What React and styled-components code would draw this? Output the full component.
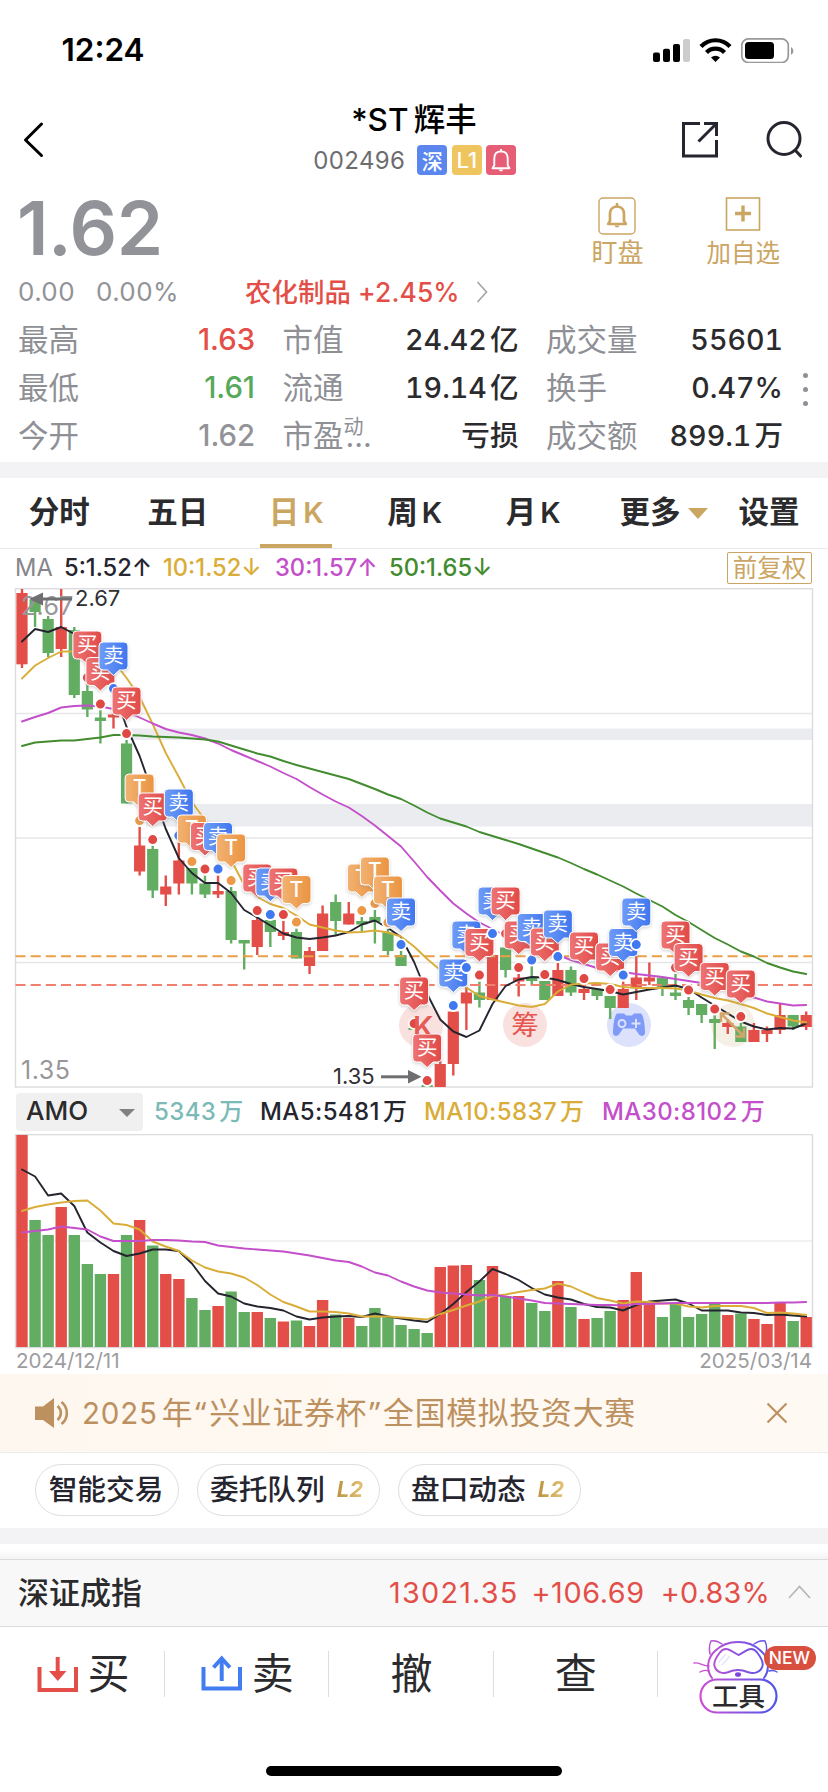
import React, { useState } from 'react'
import styled, { createGlobalStyle, css } from 'styled-components'

const GlobalStyle = createGlobalStyle`
  * { box-sizing: border-box; }
  body {
    margin: 0;
    background: #fff;
    color: #2b2b2d;
    font-family: Inter, "Noto Sans CJK SC", sans-serif;
  }
  svg { display: block; flex: none; }
  svg text { font-family: Inter, "Noto Sans CJK SC", sans-serif; }
  button { font: inherit; color: inherit; border: 0; background: none; padding: 0; }
`

const RED = '#e34f48'
const GREEN = '#62ad62'
const GOLD = '#cba562'
const GRAY = '#929398'
const BLACK = '#25252f'
const YELLOW = '#d9ad38'
const PURPLE = '#c44fca'
const DARKGREEN = '#438b2f'

const Screen = styled.main`
  width: 828px;
  height: 1792px;
  overflow: hidden;
  display: flex;
  flex-direction: column;
  background: #fff;
`

const StatusBar = styled.div`
  height: 88px;
  padding: 11px 33px 0 61.5px;
  display: flex;
  align-items: center;
  justify-content: space-between;
`
const Clock = styled.span`
  color: #000;
  font-size: 31.5px;
  font-weight: 600;
`

const NavBar = styled.header`
  height: 102px;
  padding: 0 26px 0 22px;
  display: grid;
  grid-template-columns: 120px 1fr 120px;
  align-items: start;
`
const BackButton = styled.button`
  margin-top: 33px;
  width: 24px;
`
const Title = styled.div`
  display: flex;
  flex-direction: column;
  align-items: center;
`
const StockName = styled.h1`
  margin: 9px 0 0 4px;
  height: 46px;
  line-height: 46px;
  color: #000;
  font-size: 31.5px;
  font-weight: 500;
  word-spacing: -3px;
`
const CodeRow = styled.div`
  display: flex;
  align-items: center;
  height: 34px;
  margin-left: 10px;
`
const Code = styled.span`
  color: #6d6d70;
  font-size: 24px;
  letter-spacing: 0.4px;
  margin-right: 12px;
`
const Badge = styled.span`
  width: 30px;
  height: 30px;
  margin-right: 4.5px;
  border-radius: 4px;
  display: flex;
  align-items: center;
  justify-content: center;
  color: #fff;
  font-size: ${(p) => p.$size || 21}px;
  font-weight: 500;
  background: ${(p) => p.$bg};
`
const NavActions = styled.div`
  display: flex;
  justify-content: space-between;
  padding-top: 33px;
`

const Quote = styled.section`
  height: 124px;
  padding: 0 48px 0 18px;
  display: flex;
  flex-direction: column;
`
const PriceRow = styled.div`
  display: flex;
  justify-content: space-between;
  height: 82px;
`
const Price = styled.div`
  margin-left: -1px;
  color: ${GRAY};
  font-size: 74.5px;
  font-weight: 600;
  line-height: 76px;
  letter-spacing: -0.4px;
`
const QuickActions = styled.div`
  display: flex;
  gap: 63px;
  padding-top: 7px;
`
const QuickAction = styled.button`
  display: flex;
  flex-direction: column;
  align-items: center;
  color: ${GOLD};
  font-size: ${(p) => p.$size}px;
  line-height: 36px;
`
const ChangeRow = styled.div`
  display: flex;
  align-items: center;
  height: 40px;
  line-height: 40px;
  color: ${GRAY};
  font-size: 26px;
`
const Change = styled.span`
  width: ${(p) => p.$w}px;
  letter-spacing: 0.4px;
`
const Sector = styled.span`
  color: ${RED};
  font-size: 26.4px;
  font-weight: 500;
  letter-spacing: 0.1px;
  margin-right: 16px;
`

const Stats = styled.section`
  height: 148px;
  padding: 2px 13px 0 18px;
  display: flex;
`
const StatGrid = styled.div`
  width: 765px;
  display: grid;
  grid-template-columns: 237px 236px 237px;
  column-gap: 27.5px;
  grid-auto-rows: 48px;
`
const Stat = styled.div`
  display: flex;
  justify-content: space-between;
  line-height: 48px;
`
const StatLabel = styled.span`
  color: #8f9095;
  font-size: 30.5px;
  sup {
    display: inline-block;
    font-size: 20px;
    line-height: 20px;
    vertical-align: 13px;
  }
`
const Dots = styled.span`
  margin-left: -18px;
`
const StatValue = styled.span`
  color: ${(p) => p.$color || '#2b2b2d'};
  font-size: 29.3px;
  font-weight: 500;
  ${(p) => !p.$color && css`
    font-size: 28.6px;
    font-variant-numeric: tabular-nums;
  `}
`
const Unit = styled.span`
  margin-left: ${(p) => p.$gap || 3}px;
`
const MoreDots = styled.div`
  width: 6px;
  margin: 57px 0 0 20px;
  display: flex;
  flex-direction: column;
  gap: 9px;
  i {
    width: 5px;
    height: 5px;
    border-radius: 50%;
    background: #909196;
  }
`

const Divider = styled.div`
  height: 16px;
  background: #f3f3f5;
`

const Tabs = styled.nav`
  height: 71px;
  display: flex;
  border-bottom: 1px solid #e9e9eb;
`
const Tab = styled.button`
  flex: none;
  width: ${(p) => p.$w || 118.5}px;
  display: flex;
  align-items: center;
  justify-content: center;
  height: 70px;
  font-size: 30.5px;
  font-weight: 600;
  white-space: nowrap;
  span {
    height: 70px;
    line-height: 68px;
    padding: 0 8.5px;
  }
  b { margin-left: 4px; font-size: 29px; font-weight: 600; }
  ${(p) => p.$active && css`
    color: ${GOLD};
    span { border-bottom: 4px solid ${GOLD}; }
  `}
`
const Triangle = styled.i`
  margin-left: -1px;
  border: 10px solid transparent;
  border-top: 11px solid ${GOLD};
  border-bottom: 0;
`

const MaRow = styled.div`
  height: 39px;
  padding: 0 16px 2px 15px;
  display: flex;
  align-items: center;
  font-size: 23.7px;
`
const MaItem = styled.span`
  width: ${(p) => p.$w}px;
  color: ${(p) => p.$color};
  font-weight: ${(p) => p.$weight || 500};
  white-space: nowrap;
`
const AdjustButton = styled.button`
  margin: 1px 0 0 auto;
  width: 85px;
  height: 32px;
  line-height: 29px;
  border: 1.5px solid ${GOLD};
  border-radius: 2px;
  color: ${GOLD};
  font-size: 24.5px;
`

const AmoRow = styled.div`
  height: 45px;
  padding: 0 16px;
  display: flex;
  align-items: center;
`
const AmoSelect = styled.button`
  width: 127px;
  height: 38px;
  margin-right: 11px;
  padding: 0 8px 3px 10px;
  display: flex;
  align-items: center;
  justify-content: space-between;
  border-radius: 4px;
  background: #f0f0f0;
  font-size: 26px;
  font-weight: 500;
  line-height: 35px;
  i {
    margin-top: 5px;
    border: 8px solid transparent;
    border-top: 8px solid #808085;
    border-bottom: 0;
  }
`
const AmoItem = styled.span`
  width: ${(p) => p.$w}px;
  padding-bottom: 4px;
  color: ${(p) => p.$color};
  font-size: 24px;
  font-weight: 500;
  letter-spacing: 0.4px;
  white-space: nowrap;
`
const Dates = styled.div`
  height: 25px;
  padding: 0 16px;
  display: flex;
  justify-content: space-between;
  line-height: 24px;
  color: #9d9da0;
  font-size: 20.6px;
`

const Banner = styled.div`
  height: 79px;
  padding: 0 40px 0 35px;
  display: flex;
  align-items: center;
  background: linear-gradient(90deg, #fef7f0, #fefaf3);
  border-bottom: 1px solid #ececec;
  color: #bd9060;
`
const BannerText = styled.span`
  margin: -5px 0 0 12px;
  flex: 1;
  font-size: 30.8px;
  letter-spacing: 0.8px;
  em {
    font-family: "Noto Sans", sans-serif;
    font-style: normal;
    padding: 0 2px;
  }
`
const Year = styled.span`
  font-size: 29.5px;
  margin-right: 4px;
`

const Pills = styled.div`
  height: 75px;
  padding: 0 35px;
  display: flex;
  gap: 18px;
  align-items: center;
`
const Pill = styled.button`
  height: 52px;
  width: ${(p) => p.$w}px;
  padding-right: 2px;
  margin-top: -2px;
  border: 1.5px solid #dfdfe2;
  border-radius: 26px;
  color: ${BLACK};
  font-size: 28.7px;
  font-weight: 500;
  display: flex;
  align-items: center;
  justify-content: center;
  line-height: 47px;
`
const Level2 = styled.span`
  margin-left: 12px;
  padding-right: 2px;
  font-size: 22px;
  font-weight: 700;
  font-style: italic;
  color: transparent;
  background: linear-gradient(90deg, #bb9440, #e6c67c);
  background-clip: text;
`

const Gap = styled.div`
  height: 15px;
  background: linear-gradient(#fff 40%, #f3f3f3);
`
const IndexBar = styled.div`
  height: 68px;
  padding: 0 17px 2px 18px;
  display: flex;
  align-items: center;
  background: #f8f8f8;
  border-top: 1.5px solid #dcdcde;
  border-bottom: 1.5px solid #dcdcde;
`
const IndexName = styled.span`
  flex: 1;
  margin-top: -4px;
  font-size: 31px;
  font-weight: 500;
`
const IndexValue = styled.span`
  color: ${RED};
  font-size: 28.8px;
  margin-right: ${(p) => p.$gap}px;
  letter-spacing: ${(p) => p.$ls}px;
`

const ActionBar = styled.footer`
  height: 93px;
  padding-left: 1px;
  display: flex;
  align-items: center;
`
const Action = styled.button`
  width: 164.2px;
  height: 46px;
  padding-left: 1px;
  display: flex;
  align-items: center;
  justify-content: center;
  gap: 9px;
  font-size: 42px;
  line-height: 46px;
  border-right: 1px solid #dedee0;
`
const Tools = styled.div`
  flex: 1;
  height: 94px;
`
const HomeIndicator = styled.div`
  width: 296px;
  height: 10px;
  margin: 46px auto 0;
  border-radius: 5px;
  background: #000;
`

/* ---------- chart data ---------- */

// [up?, body top, body bottom, high, low]
const CANDLES = [
  [1, 593, 664.3, 589, 668], [0, 600, 612, 600, 627], [0, 619, 653, 616, 657], [1, 627, 649, 589, 657],
  [0, 630, 695, 627, 698], [0, 691, 709.5, 680, 717], [0, 717.5, 721, 710, 743.5], [1, 714.5, 717.5, 713, 728.5],
  [0, 743.5, 803.5, 740, 803.5], [1, 845.5, 871.5, 826.5, 875.5], [0, 849, 890.5, 845.5, 898], [1, 886.5, 894.5, 875.5, 906],
  [1, 860.5, 883.5, 842.5, 894.5], [0, 868, 883.5, 868, 894.5], [0, 883.5, 894.5, 875.5, 898], [1, 891, 894.5, 875.5, 898],
  [0, 891, 940, 887, 943.5], [0, 940, 943.5, 940, 969.5], [1, 920, 947, 918, 955], [0, 920, 932, 920, 947],
  [1, 932, 936, 921, 940], [0, 932, 958.5, 928.5, 958.5], [1, 951, 966, 947, 974], [1, 913.5, 951, 905.5, 951],
  [0, 902, 921, 894.5, 936], [1, 913.5, 924.5, 902, 924.5], [0, 921, 924.5, 917, 932.5], [0, 917, 922, 910, 943.5],
  [0, 932.5, 951, 928.5, 955], [0, 955, 966, 951, 966], [0, 1028, 1030, 1028, 1030], [0, 1085, 1087, 1085, 1087],
  [1, 1064, 1087, 1061, 1087], [1, 1011.5, 1064, 1011.5, 1075.5], [1, 992.5, 1003.5, 987, 1030], [0, 992.5, 1000, 981.5, 1007.5],
  [1, 955, 1000, 955, 1000], [0, 947.5, 970, 947.5, 977.5], [1, 977.5, 981.5, 974, 996.5], [0, 977, 981, 966, 984.5],
  [0, 981, 1000, 981, 1000], [1, 970, 996, 962.5, 996], [0, 970, 992.5, 966.5, 996], [1, 989, 993, 985, 1000],
  [0, 989, 996, 989, 1000], [0, 996, 1008, 996, 1019], [1, 989, 1008, 981.5, 1008], [1, 977.5, 987, 956, 1000],
  [1, 977.5, 981.5, 962.5, 985], [0, 977.5, 987, 977.5, 996], [0, 992.5, 996, 974, 1000], [0, 1000, 1008, 997, 1015],
  [0, 1004, 1015, 1004, 1023], [0, 1019, 1023, 1015, 1049], [1, 1023, 1027, 1019, 1034], [0, 1026.5, 1042, 1023, 1042],
  [1, 1030, 1042, 1023, 1042], [1, 1030, 1034, 1026.5, 1042], [1, 1015, 1030, 1004, 1034], [0, 1015, 1026.5, 1015, 1030],
  [1, 1015, 1027, 1011.5, 1030],
]

const MA5 = [641.5, 629, 632, 627, 634, 644, 661, 690, 727, 756, 793, 829, 858, 873, 883, 883, 893, 910, 917.5, 925.5, 933.5, 937.5, 939, 937.5, 935.5, 932, 924.5, 920.5, 928, 937, 962, 994, 1019.5, 1031.5, 1037, 1030.5, 1004, 986, 979.5, 977, 977.5, 980, 984, 987, 989, 991, 994.5, 992, 989.5, 987.5, 985.5, 989, 997.5, 1005.5, 1013.5, 1021.5, 1026.5, 1029.5, 1028, 1028.5, 1023.5]
const MA10 = [678.5, 665.5, 658, 651.5, 651.5, 652, 654, 661, 678, 697, 724, 753, 777, 802, 820, 841, 860, 885, 897, 904, 908, 915.5, 924.5, 927.5, 930.5, 932.5, 932, 930.5, 932.5, 936.5, 946.5, 959, 970, 978, 987.5, 996, 999.5, 1002.5, 1005.5, 1007, 1004, 991.5, 984.5, 983.5, 983, 984, 987, 988, 988, 988, 988.5, 990.5, 994.5, 998, 1000.5, 1004, 1008, 1013.5, 1017, 1020.5, 1022.5]
const MA30 = [721.5, 717, 713, 707.5, 706, 705.5, 706.5, 709, 712, 717.5, 723.5, 729, 732.5, 735, 738.5, 743.5, 750, 755.5, 761, 766.5, 773, 779, 787, 794.5, 801.5, 807.5, 816, 825.5, 836, 846.5, 861.5, 877, 890.5, 903.5, 913.5, 922.5, 929, 936, 941, 946, 950, 955, 960, 964, 968, 970, 972, 974, 975.5, 977, 979, 981, 983, 987, 990, 994, 997.5, 1001.5, 1003.5, 1005.5, 1005]
const MA50 = [746, 742.5, 741.5, 740.5, 740.5, 739, 737.5, 735, 735, 735.5, 736.5, 737, 737.5, 738.5, 739.5, 741.5, 745.5, 749.5, 753.5, 756.5, 761, 765, 768.5, 772, 775.5, 779, 784, 789, 794.5, 799, 805.5, 812.5, 818.5, 822.5, 826.5, 832, 836, 840, 844, 848.5, 853, 857.5, 863, 869, 874.5, 880.5, 886.5, 893.5, 900, 906.5, 915, 922, 930, 938, 944.5, 951.5, 956.5, 963, 967.5, 971.5, 974]

// [candle index, kind, top]
const MARKERS = [
  [5, '买', 631], [6, '买', 657.5], [7, '卖', 642], [8, '买', 687], [9, 'T', 774], [10, '买', 793], [12, '卖', 789],
  [13, 'T', 815], [14, '买', 822.5], [15, '卖', 822.5], [16, 'T', 834], [18, '买', 864], [19, '卖', 868], [20, '买', 868],
  [21, 'T', 875.5], [26, 'T', 864], [27, 'T', 857], [28, 'T', 876], [29, '卖', 898], [30, '买', 977], [31, '买', 1034],
  [33, '卖', 959], [34, '卖', 921], [35, '买', 928.5], [36, '卖', 887], [37, '买', 887], [38, '买', 921], [39, '卖', 913.5],
  [40, '买', 928], [41, '卖', 910], [43, '买', 932], [45, '买', 943], [46, '卖', 928.5], [47, '卖', 898], [50, '买', 921],
  [51, '买', 943.5], [53, '买', 962.5], [55, '买', 970],
]

const VOLUME = [1135, 1220, 1235, 1207, 1235, 1264, 1274, 1274, 1235, 1220, 1245.5, 1274, 1279, 1298, 1310, 1306, 1291.5, 1312, 1312, 1318, 1321.5, 1320.5, 1326, 1300, 1314.5, 1318, 1326, 1308, 1317, 1325, 1329, 1333, 1267, 1265.5, 1265, 1280, 1266, 1296, 1296, 1303, 1311, 1281, 1307, 1319, 1318, 1311, 1300, 1272, 1303, 1317, 1304, 1317, 1314, 1303, 1315, 1313.5, 1319, 1324, 1302.5, 1321, 1317]
const VMA5 = [1169.5, 1176.5, 1195.5, 1193.5, 1206, 1232.5, 1242.5, 1251, 1256, 1253.5, 1249.5, 1249.5, 1251, 1263.5, 1281, 1293.5, 1296.5, 1303.5, 1306.5, 1308, 1310.5, 1316.5, 1319.5, 1317.5, 1316.5, 1316, 1317, 1313.5, 1316.5, 1318.5, 1320.5, 1322, 1314, 1304, 1292, 1281.5, 1269, 1274, 1280, 1288, 1294.5, 1297.5, 1299.5, 1304, 1307, 1307.5, 1310.5, 1305, 1301.5, 1300.5, 1299.5, 1303.5, 1310.5, 1310.5, 1310.5, 1312.5, 1313, 1315, 1314.5, 1315.5, 1316.5]
const VMA10 = [1211, 1207, 1204.5, 1202.5, 1201, 1200.5, 1210.5, 1223.5, 1225, 1229.5, 1241.5, 1246.5, 1251, 1260.5, 1267.5, 1271.5, 1273.5, 1277.5, 1285, 1294.5, 1302, 1306.5, 1311.5, 1311.5, 1312, 1313.5, 1316.5, 1316.5, 1316.5, 1317.5, 1318.5, 1319.5, 1314, 1310, 1305.5, 1301.5, 1296, 1294.5, 1292, 1290, 1288.5, 1283.5, 1286.5, 1292.5, 1298, 1300.5, 1303.5, 1301.5, 1302, 1303.5, 1303.5, 1306.5, 1307.5, 1306, 1306, 1306, 1308, 1313, 1312.5, 1313.5, 1315]
const VMA30 = [1232.5, 1231, 1229.5, 1226.5, 1228, 1229.5, 1236.5, 1241, 1241, 1241, 1240, 1240, 1240.5, 1241.5, 1242, 1245.5, 1247, 1248.5, 1249.5, 1250.5, 1251.5, 1253.5, 1255.5, 1258, 1260.5, 1262, 1266.5, 1272.5, 1275.5, 1281.5, 1286.5, 1290.5, 1292.5, 1293.5, 1294.5, 1295.5, 1295, 1296.5, 1298.5, 1300.5, 1303, 1303.5, 1304, 1304.5, 1305, 1305, 1305.5, 1304, 1304, 1303.5, 1303, 1303, 1303, 1303, 1303, 1303, 1303, 1303, 1302.5, 1302.5, 1302]

const xOf = (i) => 22 + i * 13.07
const toPoints = (list) => list.map((y, i) => `${xOf(i).toFixed(1)},${y}`).join(' ')

const Line = ({ data, color }) => (
  <polyline points={toPoints(data)} fill="none" stroke={color} strokeWidth="1.9" strokeLinejoin="round" strokeLinecap="round" />
)

const KIND = {
  买: { fill: 'url(#buy)', dot: '#e04843' },
  卖: { fill: 'url(#sell)', dot: '#4078f0' },
  T: { fill: 'url(#tee)', dot: '#ec9a47' },
}

const Marker = ({ index, kind, top }) => {
  const x = xOf(index)
  return (
    <g>
      <circle cx={x} cy={top + 46.6} r="5.4" fill={KIND[kind].dot} stroke="#fff" strokeWidth="1.8" />
      <g filter="url(#drop)">
        <path
          d={`M${x - 10.5} ${top}h21a4 4 0 0 1 4 4v20a4 4 0 0 1-4 4h-4.5l-6 5.5l-6-5.5h-4.5a4 4 0 0 1-4-4v-20a4 4 0 0 1 4-4z`}
          fill={KIND[kind].fill}
          stroke="#fff"
          strokeWidth="1"
        />
      </g>
      <text x={x} y={top + 21.3} textAnchor="middle" fontSize={kind === 'T' ? 21 : 20.5} fontWeight={kind === 'T' ? 500 : 400} fill="#fff">
        {kind}
      </text>
    </g>
  )
}

const Gradients = () => (
  <defs>
    <linearGradient id="buy"><stop offset="0" stopColor="#ee7474" /><stop offset="1" stopColor="#e04a47" /></linearGradient>
    <linearGradient id="sell"><stop offset="0" stopColor="#6f9cf6" /><stop offset="1" stopColor="#3f76ef" /></linearGradient>
    <linearGradient id="tee"><stop offset="0" stopColor="#f2b273" /><stop offset="1" stopColor="#ea9440" /></linearGradient>
    <filter id="drop" x="-30%" y="-30%" width="160%" height="170%">
      <feDropShadow dx="0" dy="1.5" stdDeviation="1.5" floodColor="#888" floodOpacity="0.35" />
    </filter>
  </defs>
)

const PriceChart = () => (
  <svg width="828" height="501" viewBox="0 588 828 501">
    <Gradients />
    <rect x="130" y="728.5" width="682" height="11.5" fill="#ebecf0" />
    <rect x="146" y="804" width="666" height="22.5" fill="#ebecf0" />
    <g stroke="#e6e6e8" strokeWidth="1.4">
      {[713.5, 838, 962.5].map((y) => <line key={y} x1="16" x2="812" y1={y} y2={y} />)}
    </g>
    <rect x="15.5" y="588.7" width="797" height="498.3" fill="none" stroke="#dcdce0" strokeWidth="1.4" />
    <circle cx="421" cy="1025.5" r="22" fill="#f9e1df" />
    <circle cx="525" cy="1025" r="22" fill="#f9e1df" />
    <circle cx="629" cy="1025" r="22" fill="#dce1fc" />
    <circle cx="733" cy="1025" r="22" fill="#f5f0e5" />
    {CANDLES.map(([up, top, bottom, high, low], i) => (
      <g key={i} fill={up ? RED : GREEN}>
        <rect x={xOf(i) - 1.2} y={high} width="2.4" height={low - high} />
        <rect x={xOf(i) - 5.6} y={top} width="11.2" height={bottom - top} />
      </g>
    ))}
    <g strokeWidth="2" strokeDasharray="10.1 5.05">
      <line x1="15.5" x2="812" y1="956.3" y2="956.3" stroke="#eaa047" />
      <line x1="15.5" x2="812" y1="985" y2="985" stroke="#ee806d" />
    </g>
    <Line data={MA5} color={BLACK} />
    <Line data={MA10} color={YELLOW} />
    <Line data={MA30} color={PURPLE} />
    <Line data={MA50} color={DARKGREEN} />

    <text x="525" y="1034.7" textAnchor="middle" fontSize="27.5" fill="#e65550">筹</text>
    <path
      d="M617 1013.5h7l2 2h6l2-2h7c3 3 4 13 4 20c-1 3-4 3-6 1l-4-6h-12l-4 6c-2 2-5 2-6-1c0-7 1-17 4-20z"
      fill="#7f9af7"
    />
    <g fill="none" stroke="#dce1fc" strokeWidth="2">
      <circle cx="622" cy="1023.5" r="3.5" />
      <path d="M631.5 1023.5h9M636 1019v9" />
    </g>
    {MARKERS.map(([index, kind, top]) => <Marker key={index} index={index} kind={kind} top={top} />)}
    <g fill="none" stroke="#d3a56d" strokeWidth="2.5">
      <path d="M722 1014.5L743 1035.5M721 1022v-8.5h8.5M744 1028v8.5h-8.5" />
    </g>
    <clipPath id="kclip"><rect x="400" y="1008" width="44" height="26" /></clipPath>
    <text x="413" y="1036.5" fontSize="29" fontWeight="600" fill="#e65a56" clipPath="url(#kclip)">K</text>

    <text x="21" y="614.5" fontSize="25" fill="#97979a" letterSpacing="0.3">2.67</text>
    <text x="21" y="1078.5" fontSize="25" fill="#97979a" letterSpacing="0.5">1.35</text>
    <path d="M72 599H40" stroke="#6f6f72" strokeWidth="3" />
    <path d="M29 599l14-6.5v13z" fill="#6f6f72" />
    <text x="75" y="606" fontSize="22" fill="#2f2f33">2.67</text>
    <path d="M381 1076.8H410" stroke="#6f6f72" strokeWidth="3" />
    <path d="M421.500 1076.8l-13.500-6.800v13.6z" fill="#6f6f72" />
    <text x="333" y="1083.5" fontSize="22" fill="#2f2f33">1.35</text>
  </svg>
)

const VolumeChart = () => (
  <svg width="828" height="215" viewBox="0 1134 828 215">
    <line x1="16" x2="812" y1="1241" y2="1241" stroke="#ececee" strokeWidth="1.5" />
    <rect x="15.5" y="1134.6" width="797" height="213" fill="none" stroke="#dcdce0" strokeWidth="1.4" />
    {VOLUME.map((y, i) => (
      <rect key={i} x={xOf(i) - 5.7} y={y} width="11.4" height={1347 - y} fill={CANDLES[i][0] ? RED : GREEN} />
    ))}
    <Line data={VMA5} color={BLACK} />
    <Line data={VMA10} color={YELLOW} />
    <Line data={VMA30} color={PURPLE} />
  </svg>
)

/* ---------- icons ---------- */

const StatusIcons = () => (
  <svg width="143" height="26" viewBox="652 36 143 26">
    <rect x="653" y="51.5" width="7" height="9.5" rx="2" />
    <rect x="663" y="47.7" width="7" height="13.3" rx="2" />
    <rect x="673" y="43" width="7" height="18" rx="2" />
    <rect x="683" y="38" width="7" height="23" rx="2" fill="#ccc" />
    <g fill="none" stroke="#000" strokeWidth="4.2">
      <path d="M701 45.5a20 20 0 0 1 29 0" />
      <path d="M706.5 51.500a12.500 12.500 0 0 1 18 0" />
    </g>
    <path d="M711 56.5a7 7 0 0 1 9 0l-4.5 4.500z" />
    <rect x="741.8" y="37.9" width="46.5" height="23.6" rx="6.5" fill="none" stroke="#999" strokeWidth="1.7" />
    <rect x="745" y="41" width="29" height="17" rx="3.5" />
    <path d="M791 46a4.5 4.5 0 0 1 0 8z" fill="#999" />
  </svg>
)

const BellShape = ({ color, width }) => (
  <g stroke={color} strokeWidth={width} fill="none" strokeLinejoin="round">
    <path d="M10 2.5c-5 0-7 3.500-7 7.500v7l-1.8 3h17.6l-1.8-3v-7c0-4-2-7.500-7-7.500z" />
    <path d="M10 0v2.5" strokeLinecap="round" />
    <path d="M7.5 21.5a2.6 2.6 0 0 0 5 0z" fill={color} stroke="none" />
  </g>
)

const CatTools = () => (
  <svg width="170" height="94" viewBox="658 1626 170 94">
    <defs>
      <linearGradient id="cat" gradientUnits="userSpaceOnUse" x1="700" x2="777" y1="0" y2="0">
        <stop offset="0" stopColor="#cf4fd0" />
        <stop offset="1" stopColor="#4a57ea" />
      </linearGradient>
    </defs>
    <g fill="none" stroke="url(#cat)" strokeWidth="2" strokeLinecap="round">
      <path d="M712 1677c-6-8-5-20 3-27c12-12 34-12 46 0c8 7 9 19 3 27" />
      <path d="M710 1653c-1-5-1-9 1-13c4-1 8 1 11 3M766 1653c1-5 1-9-1-13c-4-1-8 1-11 3" strokeWidth="1.5" />
      <path d="M738.5 1654l-9-5c-4-2-7-1-10 3c-3 4-6 9-5 13c2 7 9 8 14 6c7-3 12-3 19 0c6 2 13 1 15-6c1-4-2-9-5-13c-3-4-6-5-10-3z" />
      <path d="M694 1662c5-1 9 3 15 3M700 1671c3-2 6-2 9-1M769 1670c3-1 5-1 8 1" strokeWidth="1.4" />
    </g>
    <path d="M718 1662l8-9M722 1664l8-9" stroke="#e3e6fb" strokeWidth="1.5" />
    <ellipse cx="738" cy="1673.5" rx="3" ry="2.3" fill="#7e43e0" />
    <rect x="700.5" y="1678.5" width="76" height="33" rx="16.5" fill="#fff" stroke="url(#cat)" strokeWidth="2.2" />
    <text x="738.5" y="1704.5" textAnchor="middle" fontSize="26.500" fontWeight="500" fill="#2b2b2d">工具</text>
    <rect x="764" y="1645" width="52" height="24" rx="12" fill="#d94f3f" />
    <text x="789.5" y="1663.2" textAnchor="middle" fontSize="17.5" fontWeight="500" fill="#fff">NEW</text>
  </svg>
)

const STATS = [
  ['最高', '1.63', RED], ['市值', '24.42', null, '亿'], ['成交量', '55601'],
  ['最低', '1.61', '#56a95b'], ['流通', '19.14', null, '亿'], ['换手', '0.47%'],
  ['今开', '1.62', GRAY], ['市盈', '亏损'], ['成交额', '899.1', null, '万'],
]

const AMO = [
  ['5343', 106, '#7bbab6'],
  ['MA5:5481', 164, BLACK],
  ['MA10:5837', 178, YELLOW],
  ['MA30:8102', 170, PURPLE],
]

const TABS = [['分时'], ['五日'], ['日', 'K'], ['周', 'K'], ['月', 'K']]

function App() {
  const [tab, setTab] = useState(2)

  return (
    <>
      <GlobalStyle />
      <Screen>
        <StatusBar>
          <Clock>12:24</Clock>
          <StatusIcons />
        </StatusBar>

        <NavBar>
          <BackButton aria-label="返回">
            <svg width="24" height="38" fill="none" stroke="#000" strokeWidth="3" strokeLinecap="round" strokeLinejoin="round">
              <path d="M19.500 3L3.500 19L19.500 34.500" />
            </svg>
          </BackButton>
          <Title>
            <StockName>*ST 辉丰</StockName>
            <CodeRow>
              <Code>002496</Code>
              <Badge $bg="#5b86ee">深</Badge>
              <Badge $bg="#efc560" $size={22}>L1</Badge>
              <Badge $bg="#e65d76">
                <svg width="20" height="23" viewBox="0 0 20 24"><BellShape color="#fff" width={2} /></svg>
              </Badge>
            </CodeRow>
          </Title>
          <NavActions>
            <svg width="37" height="38" viewBox="680 121 37 38" fill="none" stroke="#25252f" strokeWidth="3">
              <path d="M698 123.500h-16.500v32.500h33v-16M702 123.500h12.500v12.500M714 124L696.500 141.500" />
            </svg>
            <svg width="36" height="38" viewBox="765 121 36 38" fill="none" stroke="#25252f" strokeWidth="3">
              <circle cx="783" cy="138.5" r="16" />
              <path d="M793.500 149.500l7 7.500" />
            </svg>
          </NavActions>
        </NavBar>

        <Quote>
          <PriceRow>
            <Price>1.62</Price>
            <QuickActions>
              <QuickAction $size={26}>
                <svg width="38" height="38">
                  <rect x="1" y="1" width="36" height="36" rx="4" fill="none" stroke={GOLD} strokeWidth="1.4" />
                  <g transform="translate(9 7)"><BellShape color={GOLD} width={2.7} /></g>
                </svg>
                盯盘
              </QuickAction>
              <QuickAction $size={24.5}>
                <svg width="36" height="38" fill="none" stroke={GOLD}>
                  <rect x="1.5" y="1" width="33" height="32" strokeWidth="1.6" />
                  <path d="M10 16.500h16M18 8.500v16" strokeWidth="3.4" />
                </svg>
                加自选
              </QuickAction>
            </QuickActions>
          </PriceRow>
          <ChangeRow>
            <Change $w={78}>0.00</Change>
            <Change $w={149}>0.00%</Change>
            <Sector>农化制品 +2.45%</Sector>
            <svg width="12" height="24" fill="none" stroke="#a6a6aa" strokeWidth="1.7">
              <path d="M1.500 2l9 10l-9 10" />
            </svg>
          </ChangeRow>
        </Quote>

        <Stats>
          <StatGrid>
            {STATS.map(([label, value, color, unit]) => (
              <Stat key={label}>
                <StatLabel>
                  {label}
                  {label === '市盈' && <><sup>动</sup><Dots>...</Dots></>}
                </StatLabel>
                <StatValue $color={color}>{value}{unit && <Unit>{unit}</Unit>}</StatValue>
              </Stat>
            ))}
          </StatGrid>
          <MoreDots><i /><i /><i /></MoreDots>
        </Stats>

        <Divider />

        <Tabs>
          {TABS.map(([name, k], i) => (
            <Tab key={name} $active={tab === i} onClick={() => setTab(i)}>
              <span>{name}{k && <b>{k}</b>}</span>
            </Tab>
          ))}
          <Tab $w={134}><span>更多</span><Triangle /></Tab>
          <Tab $w={85}><span>设置</span></Tab>
        </Tabs>

        <MaRow>
          <MaItem $w={49} $color="#86868a" $weight={400}>MA</MaItem>
          <MaItem $w={99} $color={BLACK}>5:1.52↑</MaItem>
          <MaItem $w={112} $color={YELLOW}>10:1.52↓</MaItem>
          <MaItem $w={114} $color={PURPLE}>30:1.57↑</MaItem>
          <MaItem $w={112} $color={DARKGREEN}>50:1.65↓</MaItem>
          <AdjustButton>前复权</AdjustButton>
        </MaRow>

        <PriceChart />

        <AmoRow>
          <AmoSelect>AMO<i /></AmoSelect>
          {AMO.map(([value, width, color]) => (
            <AmoItem key={value} $w={width} $color={color}>{value}<Unit>万</Unit></AmoItem>
          ))}
        </AmoRow>

        <VolumeChart />

        <Dates><span>2024/12/11</span><span>2025/03/14</span></Dates>

        <Banner>
          <svg width="35" height="32" viewBox="0 0 35 32">
            <path d="M0 9.500h8L19 1v30L8 23H0z" fill="#bd9060" />
            <path d="M22.500 9a9 9 0 0 1 0 14M26.500 5a14 14 0 0 1 0 22" fill="none" stroke="#bd9060" strokeWidth="2.6" />
          </svg>
          <BannerText><Year>2025</Year>年<em>“</em>兴业证券杯<em>”</em>全国模拟投资大赛</BannerText>
          <svg width="22" height="22" stroke="#bd9060" strokeWidth="2.2">
            <path d="M1.500 1.500l19 19M20.500 1.500l-19 19" />
          </svg>
        </Banner>

        <Pills>
          <Pill $w={144}>智能交易</Pill>
          <Pill $w={183}>委托队列<Level2>L2</Level2></Pill>
          <Pill $w={183}>盘口动态<Level2>L2</Level2></Pill>
        </Pills>

        <Divider />
        <Gap />

        <IndexBar>
          <IndexName>深证成指</IndexName>
          <IndexValue $gap={13} $ls={1.2}>13021.35</IndexValue>
          <IndexValue $gap={16} $ls={0.6}>+106.69</IndexValue>
          <IndexValue $gap={18} $ls={0.2}>+0.83%</IndexValue>
          <svg width="23" height="14" fill="none" stroke="#b4b4b8" strokeWidth="1.6">
            <path d="M1 13L11.500 1.500L22 13" />
          </svg>
        </IndexBar>

        <ActionBar>
          <Action>
            <svg width="42" height="38" fill="none" stroke={RED} strokeWidth="4">
              <path d="M2.500 12v23h36.500v-23" />
              <path d="M20.700 2v19" />
              <path d="M12 16h17.500l-8.700 10z" fill={RED} stroke="none" />
            </svg>
            买
          </Action>
          <Action>
            <svg width="42" height="38" fill="none" stroke="#417cf0" strokeWidth="4">
              <path d="M2.500 12v21.500h36.500v-21.500" />
              <path d="M20.700 5v21" />
              <path d="M12.500 12.500l8.200-9l8.200 9" />
            </svg>
            卖
          </Action>
          <Action>撤</Action>
          <Action>查</Action>
          <Tools><CatTools /></Tools>
        </ActionBar>
        <HomeIndicator />
      </Screen>
    </>
  )
}

export default App
